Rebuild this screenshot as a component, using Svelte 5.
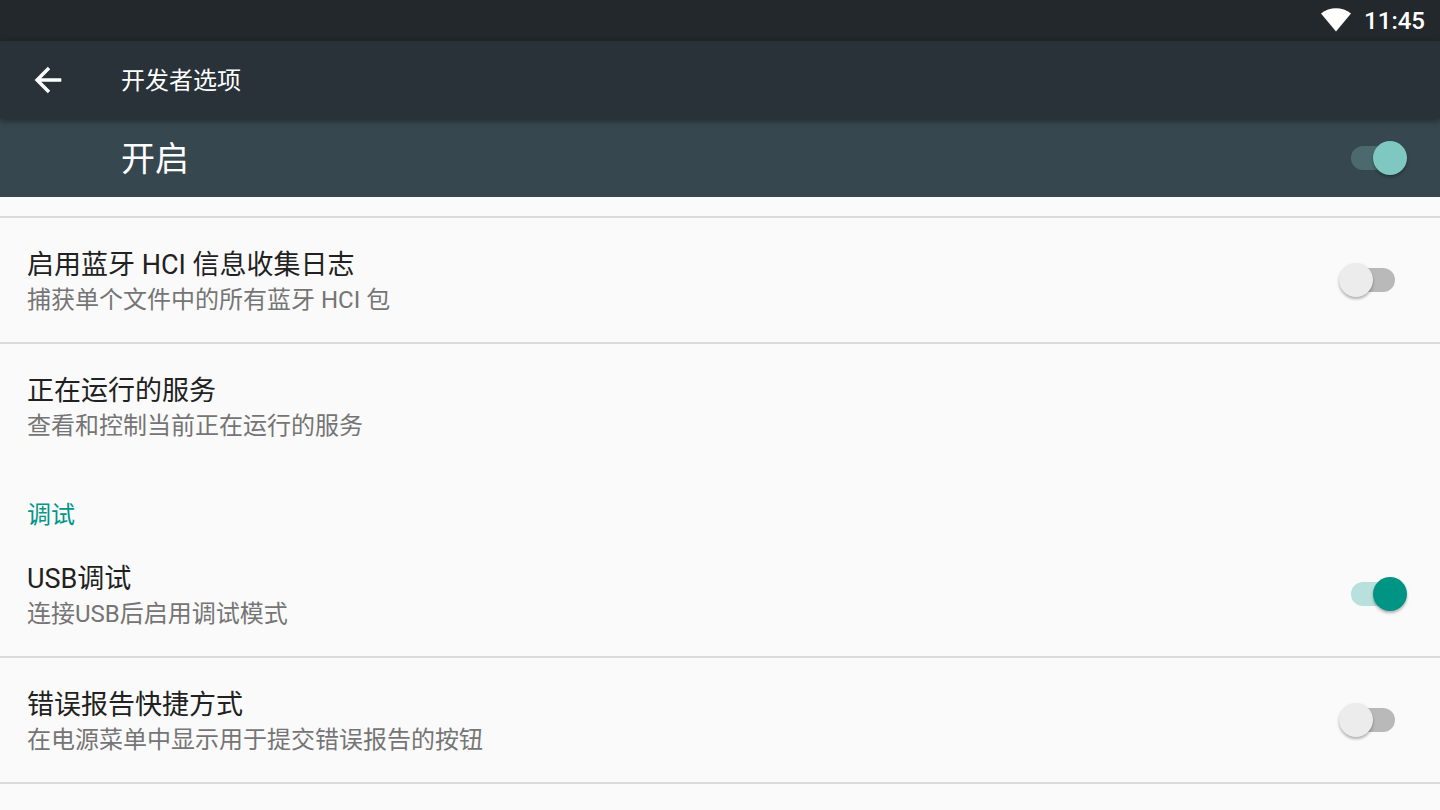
<script>
  let enabled = $state(true);
  let hciLog = $state(false);
  let usbDebug = $state(true);
  let bugReport = $state(false);
</script>

<div class="screen">
  <div class="status">
    <svg class="wifi" viewBox="0 0 30 24" aria-hidden="true">
      <path d="M0 5.4C8.5 -1.6 21.5 -1.6 30 5.4L15 23.6Z" fill="#fff" />
    </svg>
    <time>11:45</time>
  </div>

  <header class="appbar">
    <button class="back" aria-label="返回">
      <svg viewBox="0 0 28 28" aria-hidden="true">
        <path d="M27.3 14H3.5M15 2L3 14L15 26" fill="none" stroke="#fff" stroke-width="3.4" />
      </svg>
    </button>
    <h1>开发者选项</h1>
  </header>

  <div class="master">
    <label for="enabled">开启</label>
    <input id="enabled" class="switch light" type="checkbox" role="switch" bind:checked={enabled} />
  </div>

  <main>
    <div class="row">
      <label class="text" for="hci">
        <span class="title">启用蓝牙 HCI 信息收集日志</span>
        <span class="summary">捕获单个文件中的所有蓝牙 HCI 包</span>
      </label>
      <input id="hci" class="switch" type="checkbox" role="switch" bind:checked={hciLog} />
    </div>
    <button class="row last">
      <span class="text">
        <span class="title">正在运行的服务</span>
        <span class="summary">查看和控制当前正在运行的服务</span>
      </span>
    </button>
    <h2>调试</h2>
    <div class="row">
      <label class="text" for="usb">
        <span class="title">USB调试</span>
        <span class="summary">连接USB后启用调试模式</span>
      </label>
      <input id="usb" class="switch" type="checkbox" role="switch" bind:checked={usbDebug} />
    </div>
    <div class="row">
      <label class="text" for="bug">
        <span class="title">错误报告快捷方式</span>
        <span class="summary">在电源菜单中显示用于提交错误报告的按钮</span>
      </label>
      <input id="bug" class="switch" type="checkbox" role="switch" bind:checked={bugReport} />
    </div>
  </main>
</div>

<style>
  :global(body) {
    margin: 0;
    background: #fafafa;
  }

  .screen {
    font-family: Roboto, "Noto Sans CJK SC", sans-serif;
    color: #212121;
  }

  .status {
    display: flex;
    align-items: flex-start;
    justify-content: flex-end;
    gap: 13px;
    box-sizing: border-box;
    height: 41px;
    padding-right: 15px;
    background: #22282b;
    color: #fff;
    font-size: 24px;
    font-weight: 500;
    line-height: 42px;
  }

  .wifi {
    width: 30px;
    height: 24px;
    margin-top: 8px;
  }

  .appbar {
    position: relative;
    display: flex;
    align-items: center;
    height: 78px;
    background: #283238;
    color: #fff;
    box-shadow: 0 2px 6px rgba(0, 0, 0, 0.4);
  }

  .back {
    display: flex;
    margin: 0;
    padding: 24px 59px 24px 34px;
    border: 0;
    background: none;
  }

  .back svg {
    width: 28px;
    height: 28px;
  }

  h1 {
    margin: 0;
    padding-top: 2px;
    font-size: 24px;
    font-weight: 400;
    line-height: 36px;
  }

  .master {
    display: flex;
    align-items: center;
    height: 78px;
    padding: 0 33px 0 121px;
    background: #37474f;
    color: #fff;
  }

  .master label {
    flex: 1;
    padding-top: 2px;
    font-size: 34px;
    line-height: 48px;
  }

  main {
    margin-top: 19px;
    border-top: 2px solid #dadada;
  }

  .row {
    display: flex;
    align-items: center;
    box-sizing: border-box;
    width: 100%;
    margin: 0;
    padding: 0 33px 0 27px;
    border: 0;
    border-bottom: 2px solid #dadada;
    background: none;
    color: inherit;
    font: inherit;
    text-align: left;
  }

  .row.last {
    border-bottom: 0;
  }

  .text {
    display: flex;
    flex: 1;
    flex-direction: column;
    padding: 29px 0 25px;
  }

  .title {
    font-size: 27px;
    line-height: 36px;
  }

  .summary {
    color: #757575;
    font-size: 24px;
    line-height: 34px;
  }

  h2 {
    margin: 0;
    padding: 30px 27px 0;
    color: #009688;
    font-size: 24px;
    font-weight: 400;
    line-height: 34px;
  }

  .switch {
    appearance: none;
    display: grid;
    align-items: center;
    flex: none;
    width: 68px;
    height: 34px;
    margin: 0;
  }

  .switch::before,
  .switch::after {
    content: "";
    grid-area: 1 / 1;
  }

  .switch::before {
    justify-self: center;
    width: 44px;
    height: 24px;
    border-radius: 12px;
    background: #b9b9b9;
  }

  .switch::after {
    justify-self: start;
    width: 34px;
    height: 34px;
    border-radius: 50%;
    background: #ececec;
    box-shadow: 0 2px 3px rgba(0, 0, 0, 0.3);
  }

  .switch:checked::before {
    background: #b8e0dc;
  }

  .switch:checked::after {
    justify-self: end;
    background: #009485;
  }

  .switch.light:checked::before {
    background: #4c6a6e;
  }

  .switch.light:checked::after {
    background: #7fc7c1;
  }
</style>
